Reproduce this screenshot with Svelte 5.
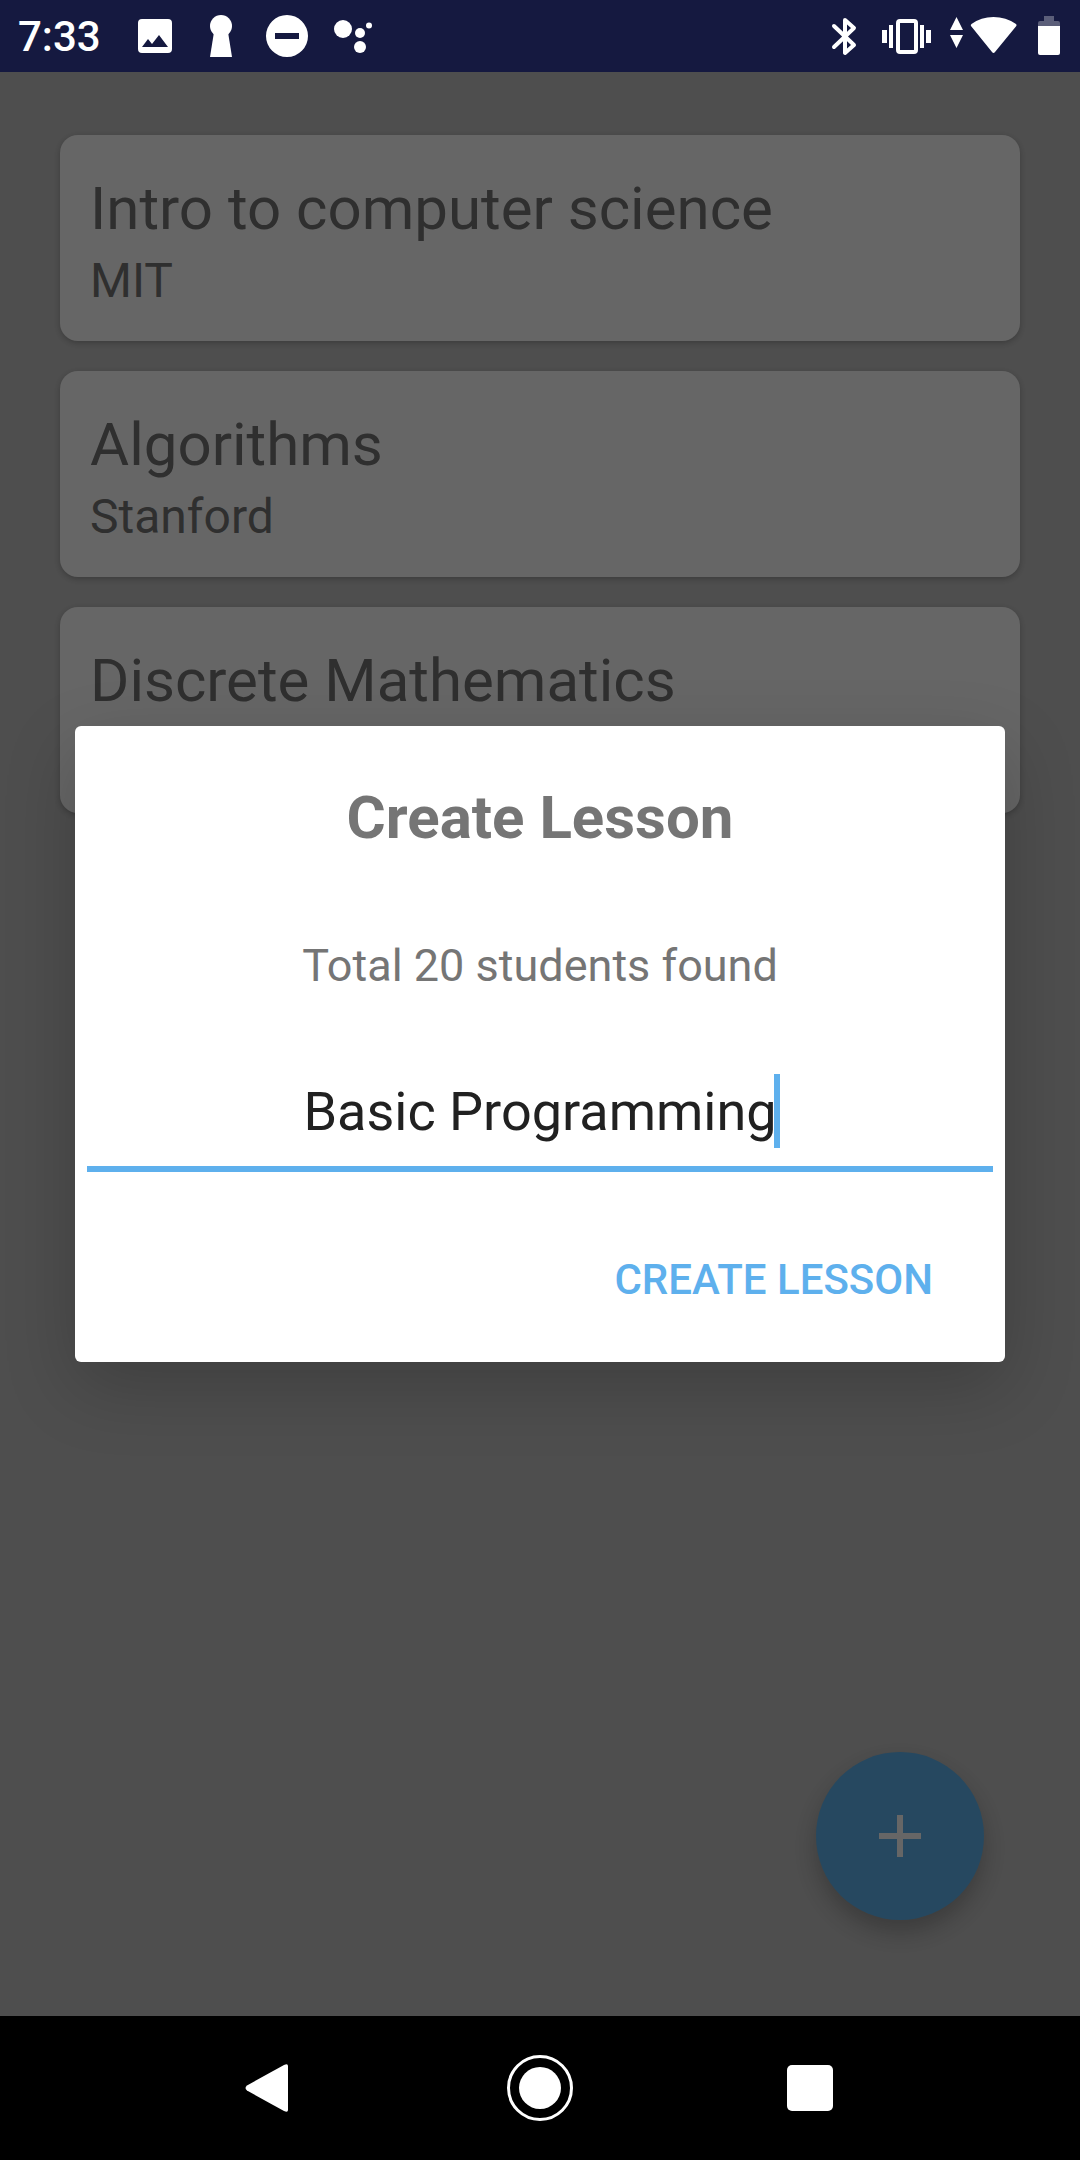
<script lang="ts">
	interface Course {
		title: string;
		school: string;
	}

	let courses: Course[] = $state([
		{ title: 'Intro to computer science', school: 'MIT' },
		{ title: 'Algorithms', school: 'Stanford' },
		{ title: 'Discrete Mathematics', school: '' }
	]);

	let studentCount = 20;
	let lessonName = $state('Basic Programming');
</script>

<div class="screen">
	<header class="status-bar">
		<time>7:33</time>
		<div class="notifications">
			<!-- picture -->
			<svg width="48" height="48" viewBox="0 0 48 48">
				<path fill-rule="evenodd" d="M11 7h26q4 0 4 4v26q0 4-4 4H11q-4 0-4-4V11q0-4 4-4zM11 35h26l-9-12-7 9-4-5z" />
			</svg>
			<!-- keyhole -->
			<svg width="48" height="48" viewBox="0 0 48 48">
				<circle cx="24" cy="14" r="11" />
				<path d="M17 20h14l4 25H13z" />
			</svg>
			<!-- do not disturb -->
			<svg width="48" height="48" viewBox="0 0 48 48">
				<path fill-rule="evenodd" d="M24 3a21 21 0 1 1 0 42a21 21 0 1 1 0-42zM12 21v6h24v-6z" />
			</svg>
			<!-- assistant -->
			<svg width="48" height="48" viewBox="0 0 48 48">
				<circle cx="14" cy="17" r="9" />
				<circle cx="31" cy="21" r="5" />
				<circle cx="31" cy="35" r="6" />
				<circle cx="40" cy="13.500" r="3" />
			</svg>
		</div>
		<div class="system">
			<!-- bluetooth -->
			<svg width="48" height="48" viewBox="0 0 48 48">
				<path class="line" d="M14 14l20 19-9 8V8l9 8-20 19" />
			</svg>
			<!-- vibrate -->
			<svg width="54" height="48" viewBox="0 0 54 48">
				<rect class="line" x="18" y="9" width="18" height="31" rx="2" />
				<path d="M2 18h5v13H2zM9 13h4v23H9zM40 13h4v23h-4zM46 18h5v13h-5z" />
			</svg>
			<!-- wifi with data arrows -->
			<svg width="72" height="48" viewBox="0 0 72 48">
				<path d="M4 18L10.500 5 17 18zM4 23h13l-6.500 13z" />
				<path d="M25 14Q24.300 12.800 25.500 12Q35 5 47.500 5T70 12Q71 12.800 70.300 14L49 40Q47.500 42 46 40z" />
			</svg>
			<!-- battery -->
			<svg width="32" height="48" viewBox="0 0 32 48">
				<path class="drained" d="M8 14V11q0-2 2-2h4V4h10v5h4q2 0 2 2v3z" />
				<path d="M8 14h22v27q0 2-2 2H10q-2 0-2-2z" />
			</svg>
		</div>
	</header>

	<main>
		<ul class="courses">
			{#each courses as course}
				<li class="course">
					<h2>{course.title}</h2>
					<p>{course.school}</p>
				</li>
			{/each}
		</ul>

		<button class="fab" aria-label="Add lesson">
			<svg width="42" height="42" viewBox="0 0 42 42">
				<path d="M18 0h6v18h18v6H24v18h-6V24H0v-6h18z" />
			</svg>
		</button>

		<div class="scrim">
			<form class="dialog" aria-labelledby="dialog-title" onsubmit={(e) => e.preventDefault()}>
				<h1 id="dialog-title">Create Lesson</h1>
				<p class="found">Total {studentCount} students found</p>
				<div class="field">
					<input type="text" aria-label="Lesson name" bind:value={lessonName} />
					<span class="caret"></span>
				</div>
				<button class="submit" type="submit">CREATE LESSON</button>
			</form>
		</div>
	</main>

	<nav class="nav-bar">
		<button aria-label="Back">
			<svg width="72" height="72" viewBox="0 0 72 72">
				<path d="M13 33.500L50 13Q54 11 54 14V58Q54 61 50 59L13 38.500Q10 36 13 33.500z" />
			</svg>
		</button>
		<button aria-label="Home">
			<svg width="72" height="72" viewBox="0 0 72 72">
				<circle class="ring" cx="36" cy="36" r="31.500" />
				<circle cx="36" cy="36" r="21" />
			</svg>
		</button>
		<button aria-label="Recent apps">
			<svg width="72" height="72" viewBox="0 0 72 72">
				<rect x="13" y="13" width="46" height="46" rx="5" />
			</svg>
		</button>
	</nav>
</div>

<style>
	:global(body) {
		margin: 0;
	}

	.screen {
		--accent: #5eb0ed;
		display: flex;
		flex-direction: column;
		min-height: 100vh;
		background: #c3c3c3;
		font-family: Roboto, sans-serif;
		color: #757575;
	}

	h1, h2, p, ul {
		margin: 0;
		padding: 0;
		font-weight: 400;
	}

	button {
		padding: 0;
		border: none;
		background: none;
		font-family: inherit;
		cursor: pointer;
	}

	svg {
		display: block;
		fill: #fff;
	}

	.status-bar {
		display: flex;
		align-items: center;
		height: 72px;
		padding: 0 18px;
		background: #151940;
		color: #fff;
	}

	.status-bar time {
		font-size: 42px;
		font-weight: 500;
	}

	.notifications {
		display: flex;
		gap: 18px;
		margin-left: 30px;
	}

	.system {
		display: flex;
		gap: 12px;
		margin-left: auto;
	}

	.system .line {
		fill: none;
		stroke: #fff;
		stroke-width: 4;
		stroke-linecap: round;
		stroke-linejoin: round;
	}

	.system .drained {
		fill: #5b5e79;
	}

	main {
		position: relative;
		display: flex;
		flex-direction: column;
		flex: 1;
	}

	.courses {
		display: flex;
		flex-direction: column;
		gap: 30px;
		padding: 63px 60px;
		list-style: none;
	}

	.course {
		padding: 36px 30px 26px;
		border-radius: 18px;
		background: #fff;
		box-shadow: 0 2px 6px rgba(0, 0, 0, 0.24);
	}

	.course h2 {
		font-size: 60px;
		line-height: 76px;
	}

	.course p {
		min-height: 68px;
		font-size: 48px;
		line-height: 68px;
	}

	.fab {
		position: absolute;
		right: 96px;
		bottom: 96px;
		display: grid;
		place-items: center;
		width: 168px;
		height: 168px;
		border-radius: 50%;
		background: #5fb4f0;
		box-shadow: 0 12px 24px rgba(0, 0, 0, 0.24);
	}

	.scrim {
		position: absolute;
		inset: 0;
		display: flex;
		align-items: center;
		padding: 0 75px;
		background: rgba(0, 0, 0, 0.6);
	}

	.dialog {
		display: flex;
		flex-direction: column;
		flex: 1;
		padding: 52px 12px 29px;
		border-radius: 6px;
		background: #fff;
		box-shadow: 0 24px 72px rgba(0, 0, 0, 0.2);
		text-align: center;
	}

	.dialog h1 {
		font-size: 60px;
		font-weight: 700;
		line-height: 80px;
	}

	.found {
		margin-top: 78px;
		font-size: 45px;
		line-height: 60px;
	}

	.field {
		display: flex;
		justify-content: center;
		margin-top: 78px;
		padding-bottom: 18px;
		border-bottom: 6px solid var(--accent);
	}

	.field input {
		field-sizing: content;
		height: 74px;
		padding: 0;
		border: none;
		outline: none;
		background: none;
		font-family: inherit;
		font-size: 54px;
		color: #212121;
		caret-color: transparent;
	}

	/* takes no room, so the text stays centred */
	.caret {
		width: 6px;
		margin: 0 -3px;
		background: var(--accent);
	}

	.submit {
		align-self: flex-end;
		height: 108px;
		margin: 53px 36px 0 0;
		padding: 0 24px;
		font-size: 42px;
		font-weight: 500;
		color: var(--accent);
	}

	.nav-bar {
		display: grid;
		grid-template-columns: repeat(3, 1fr);
		place-items: center;
		height: 144px;
		padding: 0 12.5%;
		background: #000;
	}

	.nav-bar .ring {
		fill: none;
		stroke: #fff;
		stroke-width: 3;
	}
</style>
